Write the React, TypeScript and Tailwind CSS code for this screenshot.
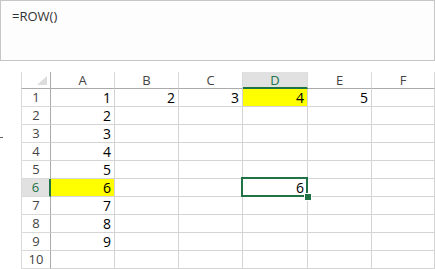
import { Fragment, type ReactNode } from 'react'

const COLS = ['A', 'B', 'C', 'D', 'E', 'F']
const ACTIVE_COL = 3
const ACTIVE_ROW = 6

// row -> { colIndex: value }
const VALUES: Record<number, Record<number, string>> = {
  1: { 0: '1', 1: '2', 2: '3', 3: '4', 4: '5' },
  2: { 0: '2' },
  3: { 0: '3' },
  4: { 0: '4' },
  5: { 0: '5' },
  6: { 0: '6', 3: '6' },
  7: { 0: '7' },
  8: { 0: '8' },
  9: { 0: '9' },
  10: {},
}

function isYellow(row: number, col: number) {
  return (row === 1 && col === 3) || (row === 6 && col === 0)
}

function Cell({ row, col, children }: { row: number; col: number; children?: ReactNode }) {
  const selected = row === ACTIVE_ROW && col === ACTIVE_COL
  return (
    <div
      className={`relative h-[18px] border-r border-b border-[#d4d4d4] pr-[3px] text-right text-[14px] leading-[17px] text-black ${
        isYellow(row, col) ? 'bg-[#ffff00]' : 'bg-white'
      }`}
    >
      {children}
      {selected && (
        <>
          <div className="absolute -left-[2px] -top-[2px] -right-[1px] -bottom-[1px] border-2 border-[#217346]" />
          <div className="absolute -right-[5px] -bottom-[5px] z-10 h-[8px] w-[8px] border border-white bg-[#217346]" />
        </>
      )}
    </div>
  )
}

export default function App() {
  const rows = Object.keys(VALUES).map(Number)

  return (
    <div className="h-[269px] w-[435px] overflow-hidden bg-white" style={{ fontFamily: '"Liberation Sans", Arial, sans-serif' }}>
      {/* ── Formula bar ───────────────────────────────────────────── */}
      <div className="h-[61px] w-[435px] border border-[#c6c6c6] bg-[#fdfdfd] pl-[11px] pt-[3px]">
        <span className="text-[13px] leading-[17px] text-[#333]" style={{ fontFamily: '"Open Sans", sans-serif' }}>
          =ROW()
        </span>
      </div>

      {/* ── Sheet ─────────────────────────────────────────────────── */}
      <div className="mt-[11px] flex">
        <div className="w-[21px] shrink-0 pt-[65px]">
          <div className="h-px w-[3px] bg-[#666]" />
        </div>

        <div
          className="grid grid-cols-[30px_64px_64px_64px_65px_64px_63px] text-[#444]"
          style={{ fontFamily: '"Open Sans", sans-serif' }}
        >
          {/* corner */}
          <div className="flex h-[17px] items-end justify-end border-l border-r border-b border-l-[#dadada] border-r-[#ababab] border-b-[#ababab] pb-[3px] pr-[3px]">
            <svg width="10" height="9" viewBox="0 0 10 9">
              <polygon points="10,0 10,9 0,9" fill="#dcdcdc" />
            </svg>
          </div>

          {COLS.map((c, i) => (
            <div
              key={c}
              className={`h-[17px] border-r border-[#dadada] text-center text-[13px] leading-[16px] ${
                i === ACTIVE_COL
                  ? 'border-b-2 border-b-[#217346] bg-[#e1e1e1] text-[#217346]'
                  : 'border-b border-b-[#ababab] text-[#444]'
              }`}
            >
              {c}
            </div>
          ))}

          {rows.map((r) => (
            <Fragment key={r}>
              <div
                className={`h-[18px] border-l border-b border-l-[#dadada] border-b-[#dadada] text-center text-[13px] leading-[17px] ${
                  r === ACTIVE_ROW
                    ? 'border-r-2 border-r-[#217346] bg-[#e1e1e1] text-[#217346]'
                    : 'border-r border-r-[#ababab] text-[#444]'
                }`}
              >
                {r}
              </div>
              {COLS.map((c, i) => (
                <Cell key={`${c}${r}`} row={r} col={i}>
                  {VALUES[r][i]}
                </Cell>
              ))}
            </Fragment>
          ))}
        </div>
      </div>
    </div>
  )
}
